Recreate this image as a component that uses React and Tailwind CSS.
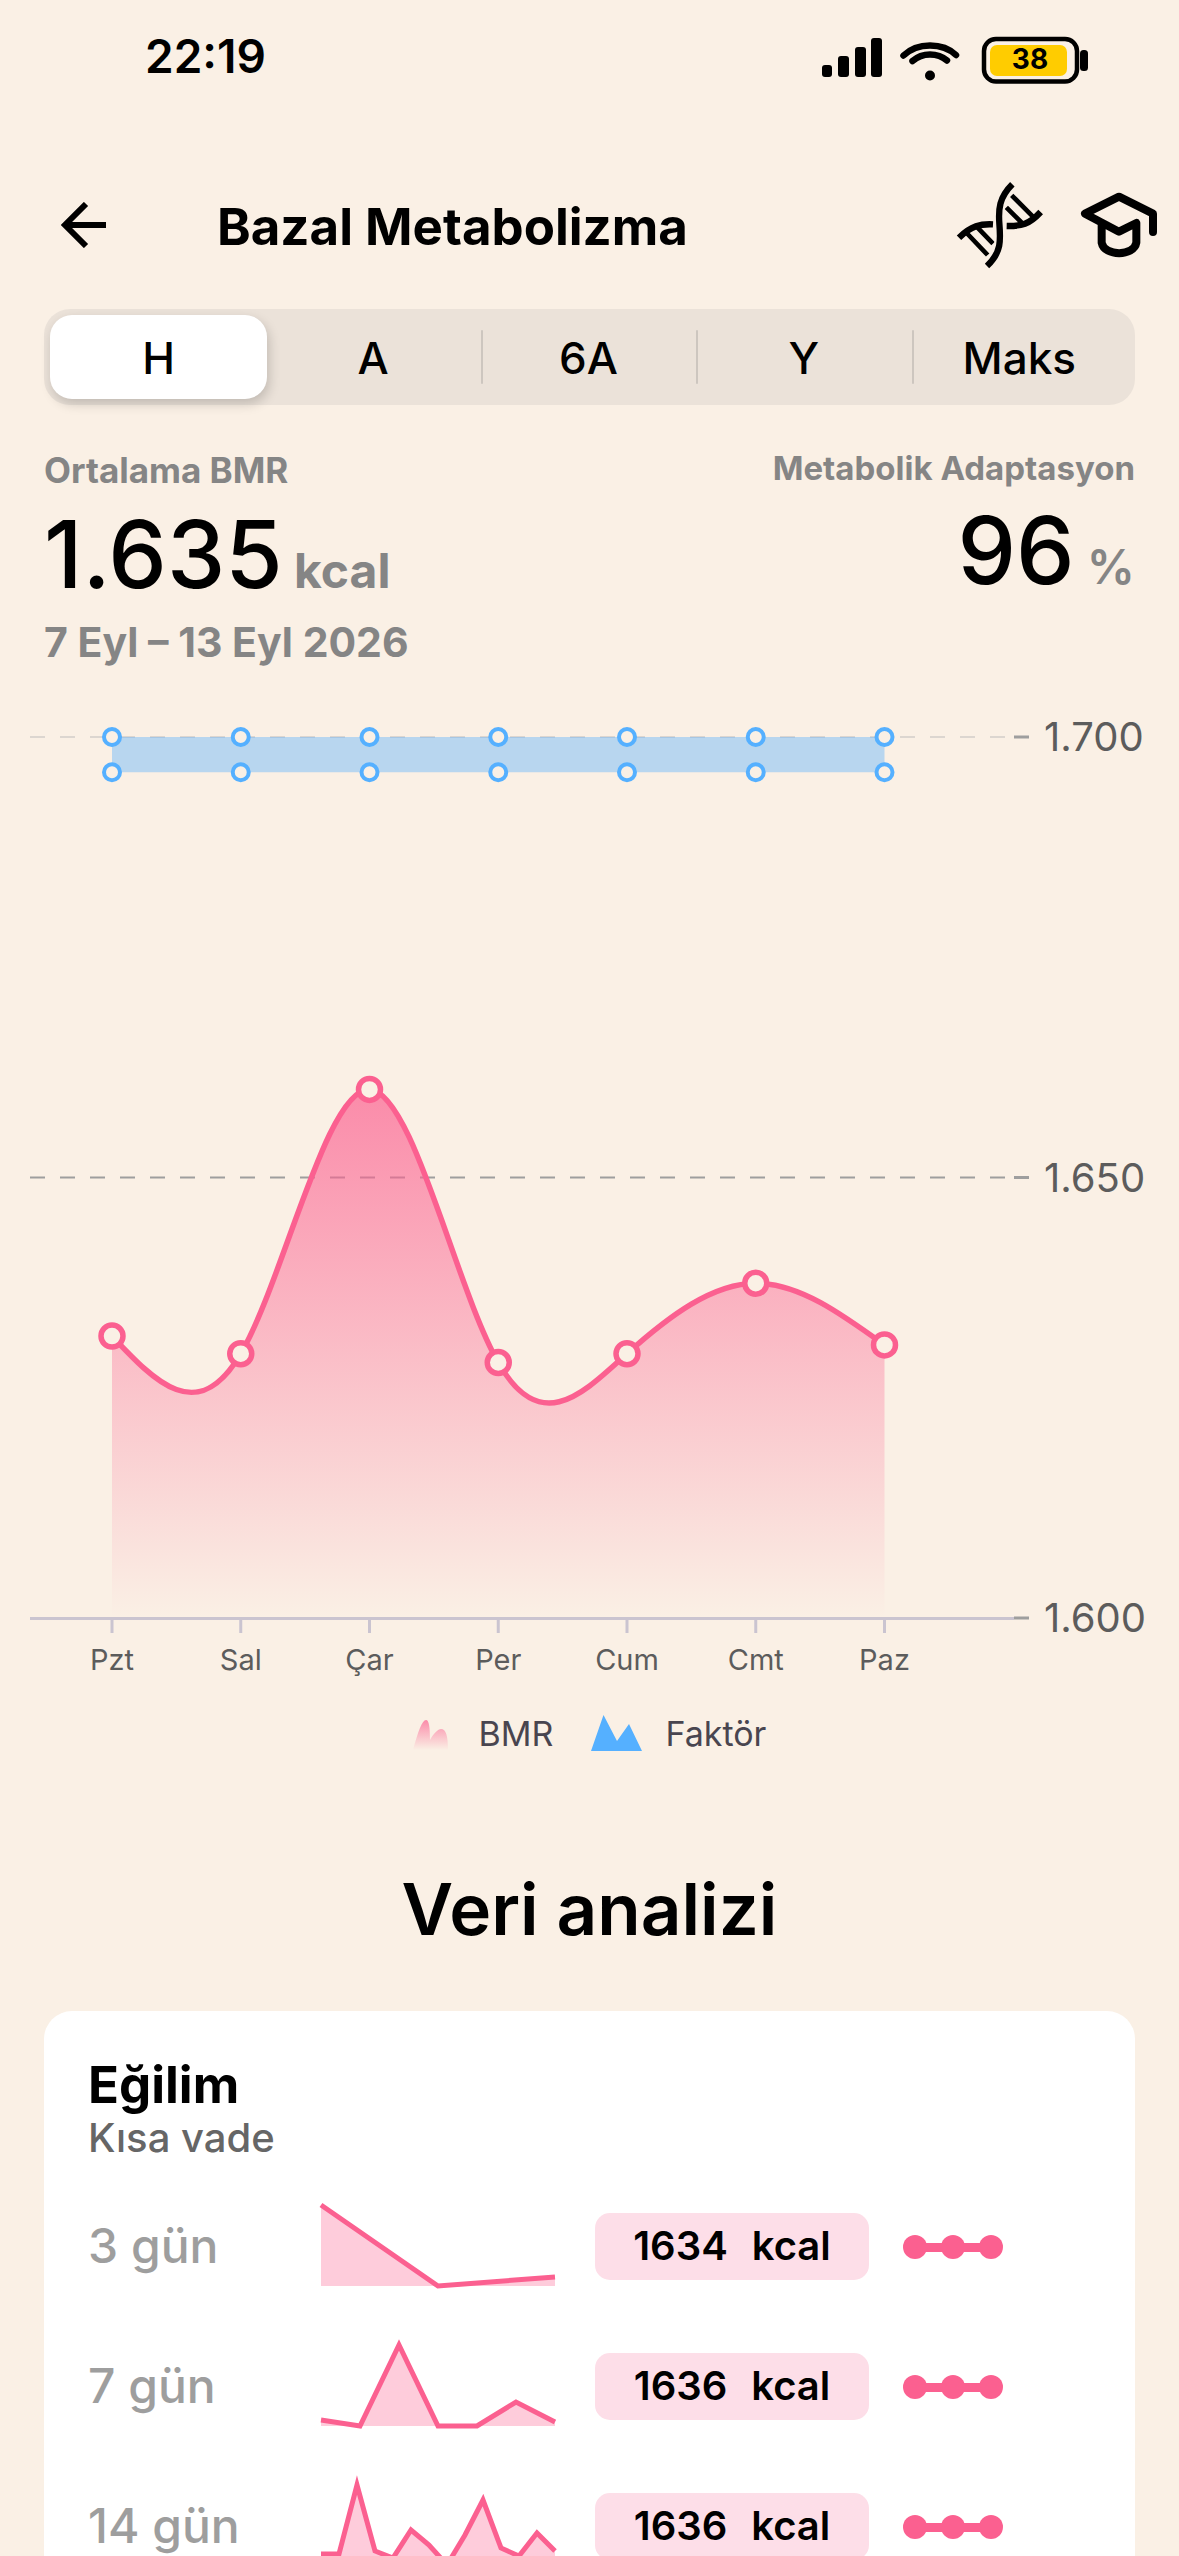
import React, { useState } from 'react';

const RANGES = ['H', 'A', '6A', 'Y', 'Maks'];

const DAYS = [
  { label: 'Pzt', bmr: 1632 },
  { label: 'Sal', bmr: 1630 },
  { label: 'Çar', bmr: 1660 },
  { label: 'Per', bmr: 1629 },
  { label: 'Cum', bmr: 1630 },
  { label: 'Cmt', bmr: 1638 },
  { label: 'Paz', bmr: 1631 }
];

const FACTOR = { low: 1696, high: 1700 };

const TRENDS = [
  { days: 3, value: 1634, points: [0, 81, 72] },
  { days: 7, value: 1636, points: [75, 81, 0, 81, 81, 57, 77] },
  { days: 14, value: 1636, points: [69, 69, 0, 66, 73, 45, 60, 80, 50, 15, 63, 71, 48, 66] }
];

const toX = (i) => 112 + i * 129 - i / 4;
const toY = (v) => 917 - (v - 1600) * 8.81;

// Natural cubic spline through evenly spaced points, as bezier segments
const splinePath = (pts) => {
  const n = pts.length;
  const m = new Array(n).fill(0);
  for (let pass = 0; pass < 40; pass++) {
    for (let i = 1; i < n - 1; i++) {
      const d = pts[i - 1].y - 2 * pts[i].y + pts[i + 1].y;
      m[i] = (6 * d - m[i - 1] - m[i + 1]) / 4;
    }
  }
  let path = `M${pts[0].x} ${pts[0].y}`;
  for (let i = 0; i < n - 1; i++) {
    const a = pts[i];
    const b = pts[i + 1];
    const dx = (b.x - a.x) / 3;
    const c1 = (2 * a.y + b.y) / 3 - (2 * m[i] + m[i + 1]) / 18;
    const c2 = (a.y + 2 * b.y) / 3 - (m[i] + 2 * m[i + 1]) / 18;
    path += ` C${a.x + dx} ${c1} ${b.x - dx} ${c2} ${b.x} ${b.y}`;
  }
  return path;
};

const StatusBar = () => (
  <div className="flex h-[120px] items-start justify-between pt-[36px] pl-[145px] pr-[91px]">
    <span className="text-[46px] leading-[40px] font-semibold">22:19</span>
    <svg className="h-[48px] w-[266px]" viewBox="822 37 266 48">
      <rect x="822" y="66" width="10" height="12" rx="3" />
      <rect x="838" y="57" width="11" height="21" rx="3" />
      <rect x="855" y="48" width="11" height="30" rx="3" />
      <rect x="871" y="39" width="11" height="39" rx="3" />
      <g fill="none" stroke="#000" strokeWidth="6.5" strokeLinecap="round">
        <path d="M903.5 56.5Q914 46.500 930 46.500T956 56" />
        <path d="M912.500 62Q920 55.500 930 55.500T947 61.500" />
      </g>
      <circle cx="930" cy="76.500" r="5" />
      <rect x="984" y="40" width="93" height="42.500" rx="12" fill="none" stroke="#000" strokeWidth="4.500" />
      <rect x="990" y="46" width="77" height="31" rx="7" fill="#ffcc00" />
      <rect x="1080" y="51" width="8" height="21" rx="3.500" />
      <text x="1030" y="70" textAnchor="middle" fontSize="28" fontWeight="700">38</text>
    </svg>
  </div>
);

const DnaIcon = () => (
  <svg className="size-[90px]" viewBox="520 480 270 270" fill="none" stroke="#000">
    <path strokeWidth="14" d="M693 526L756 589M677 562L724 609M558 639L621 705M590 622L637 671" />
    <path strokeWidth="32" stroke="#faf0e5" d="M678 508C655 536 653 570 656 610C660 660 661 692 636 722" />
    <path strokeWidth="19" d="M695 493C655 533 653 568 656 610C660 660 663 697 619 738" />
    <path strokeWidth="19" d="M535 653C572 617 600 611 637 613M678 618C722 619 746 613 780 576" />
  </svg>
);

const CapIcon = () => (
  <svg className="h-[66px] w-[78px]" viewBox="900 516 234 198" fill="none" stroke="#000" strokeWidth="24" strokeLinecap="round" strokeLinejoin="round">
    <path d="M1119 636V581L1017 530L915 581L1017 635L1069 609V668C1062 710 973 710 965 668V612" />
  </svg>
);

const Header = () => (
  <header className="flex h-[189px] items-center pt-[20px] pl-[61px] pr-[21px]">
    <button aria-label="Geri" className="mr-[110px]">
      <svg className="size-[46px]" viewBox="0 0 46 46" fill="none" stroke="#000" strokeWidth="6">
        <path d="M25 2L4 23L25 44M4 23H45" />
      </svg>
    </button>
    <h1 className="flex-1 pt-[4px] text-[51px] leading-[56px] font-bold">Bazal Metabolizma</h1>
    <button aria-label="Genetik" className="mr-[36px]"><DnaIcon /></button>
    <button aria-label="Eğitim"><CapIcon /></button>
  </header>
);

const RangePicker = () => {
  const [active, setActive] = useState(0);
  return (
    <nav className="mx-11 flex h-24 rounded-[26px] bg-[#ebe2d9] py-1.5 pr-2 pl-1.5">
      {RANGES.map((label, i) => (
        <div key={label} className="flex flex-1 items-center">
          <span className={`-mr-[2px] h-[54px] w-[2px] rounded-full ${i === 0 || i === active || i === active + 1 ? '' : 'bg-[#cdc6bf]'}`} />
          <button
            onClick={() => setActive(i)}
            className={`h-full flex-1 rounded-[22px] pt-[2px] text-[44px] font-medium ${i === active ? '-mr-[2px] bg-white shadow-[2px_5px_12px_rgba(0,0,0,0.18)]' : ''}`}
          >
            {label}
          </button>
        </div>
      ))}
    </nav>
  );
};

const Summary = () => (
  <section className="flex justify-between px-11 pt-[44px] text-[#858585]">
    <div>
      <p className="text-[35px] leading-[42px] font-bold">Ortalama BMR</p>
      <p className="mt-[11px] text-[48px] leading-[104px] font-bold">
        <span className="text-[93px] font-medium text-black">1.635</span> kcal
      </p>
      <p className="text-[41px] leading-[38px] font-bold">7 Eyl – 13 Eyl 2026</p>
    </div>
    <div className="text-right">
      <p className="text-[33px] leading-[38px] font-bold">Metabolik Adaptasyon</p>
      <p className="mt-[11px] text-[48px] leading-[104px] font-semibold">
        <span className="text-[93px] font-medium text-black">96</span> %
      </p>
    </div>
  </section>
);

const BmrChart = () => {
  const pts = DAYS.map((d, i) => ({ x: toX(i), y: toY(d.bmr) }));
  const line = splinePath(pts);
  const first = pts[0].x;
  const last = pts[pts.length - 1].x;
  const high = toY(FACTOR.high);
  const low = toY(FACTOR.low);

  return (
    <svg className="block w-full" viewBox="0 0 1179 990">
      <defs>
        <linearGradient id="bmrFill" x1="0" y1="0" x2="0" y2="1">
          <stop offset="0" stopColor="#fb6090" stopOpacity="0.7" />
          <stop offset="1" stopColor="#fb6090" stopOpacity="0" />
        </linearGradient>
      </defs>

      <path d={`M30 ${high}H1014`} stroke="#dcd6d0" strokeWidth="2" strokeDasharray="15 15" />
      <path d={`M30 ${toY(1650)}H1014`} stroke="#9e9e9e" strokeWidth="2" strokeDasharray="15 15" />

      <rect x={first} y={high} width={last - first} height={low - high} fill="#55b0ff" fillOpacity="0.4" />
      <path d={`${line} V917 H${first} Z`} fill="url(#bmrFill)" />
      <path d={line} fill="none" stroke="#fb6090" strokeWidth="5.5" />

      <path d="M30 917.5H1014" stroke="#cac4d0" strokeWidth="3" />
      {[1700, 1650, 1600].map(v => (
        <g key={v}>
          <path d={`M1014 ${toY(v)}H1029`} stroke="#9e9e9e" strokeWidth="3" />
          <text x="1044" y={toY(v) + 14} fontSize="40" fill="#5c5c5c">{`1.${v - 1000}`}</text>
        </g>
      ))}

      {DAYS.map((d, i) => (
        <g key={d.label}>
          <path d={`M${pts[i].x} 919V932`} stroke="#cac4d0" strokeWidth="3" />
          <text x={pts[i].x} y="969" fontSize="29" textAnchor="middle" fill="#5c5c5c">{d.label}</text>
          <circle cx={pts[i].x} cy={high} r="8" fill="#faf0e5" stroke="#55b0ff" strokeWidth="4" />
          <circle cx={pts[i].x} cy={low} r="8" fill="#faf0e5" stroke="#55b0ff" strokeWidth="4" />
          <circle cx={pts[i].x} cy={pts[i].y} r="11" fill="#faf0e5" stroke="#fb6090" strokeWidth="5.5" />
        </g>
      ))}
    </svg>
  );
};

const Legend = () => (
  <div className="flex h-[84px] items-center justify-center text-[34px] text-[#49454f]">
    <svg className="mr-[31px] h-[36px] w-[35px]" viewBox="0 0 35 36">
      <path d="M0 35C5 17 9 5 13 5C16 5 17 12 17 25C21 18 25 14 28 14C33 14 35 21 35 35Z" fill="url(#bmrFill)" />
    </svg>
    <span>BMR</span>
    <svg className="mr-[23px] ml-[38px] h-[36px] w-[51px]" viewBox="0 0 51 36">
      <path d="M0 36L12.500 0L26 26L38 9L51 36Z" fill="#55b0ff" />
    </svg>
    <span>Faktör</span>
  </div>
);

const Sparkline = ({ points }) => {
  const step = 234 / (points.length - 1);
  const path = points.map((y, i) => `${i ? 'L' : 'M'}${i * step} ${y}`).join(' ');
  return (
    <svg className="mb-[2px] block h-[81px] w-[234px] overflow-visible" viewBox="0 0 234 81">
      <path d={`${path} V81 H0 Z`} fill="#fb6090" fillOpacity="0.32" />
      <path d={path} fill="none" stroke="#fb6090" strokeWidth="5" strokeMiterlimit="10" />
    </svg>
  );
};

const TrendCard = () => (
  <section className="mx-11 rounded-[28px] bg-white px-[44px] pt-[45px]">
    <h3 className="text-[51px] leading-[58px] font-bold">Eğilim</h3>
    <p className="text-[40px] leading-[48px] font-medium text-[#666]">Kısa vade</p>
    <table className="mt-[14px] w-full table-fixed text-left">
      <tbody>
        {TRENDS.map(t => (
          <tr key={t.days} className="h-[140px]">
            <th className="w-[233px] text-[48px] font-medium text-[#9e9e9e]">{t.days} gün</th>
            <td className="w-[274px]"><Sparkline points={t.points} /></td>
            <td className="w-[308px]">
              <span className="flex h-[67px] w-[274px] items-center justify-center gap-[24px] rounded-[15px] bg-[#fddee8] text-[40px] font-semibold">
                <span>{t.value}</span>
                <span>kcal</span>
              </span>
            </td>
            <td>
              <svg className="block h-[26px] w-[100px]" viewBox="0 0 100 26" fill="#fb6090">
                <rect x="12" y="10" width="76" height="9" />
                <circle cx="12" cy="14" r="12" />
                <circle cx="50" cy="14" r="12" />
                <circle cx="88" cy="14" r="12" />
              </svg>
            </td>
          </tr>
        ))}
      </tbody>
    </table>
  </section>
);

const App = () => (
  <main className="h-screen overflow-hidden bg-[#faf0e5] font-['Inter','Liberation_Sans',sans-serif] text-black">
    <StatusBar />
    <Header />
    <RangePicker />
    <Summary />
    <div className="mt-[40px]">
      <BmrChart />
      <Legend />
    </div>
    <h2 className="mt-[90px] mb-[58px] text-center text-[71px] leading-[88px] font-semibold">Veri analizi</h2>
    <TrendCard />
  </main>
);

export default App;
